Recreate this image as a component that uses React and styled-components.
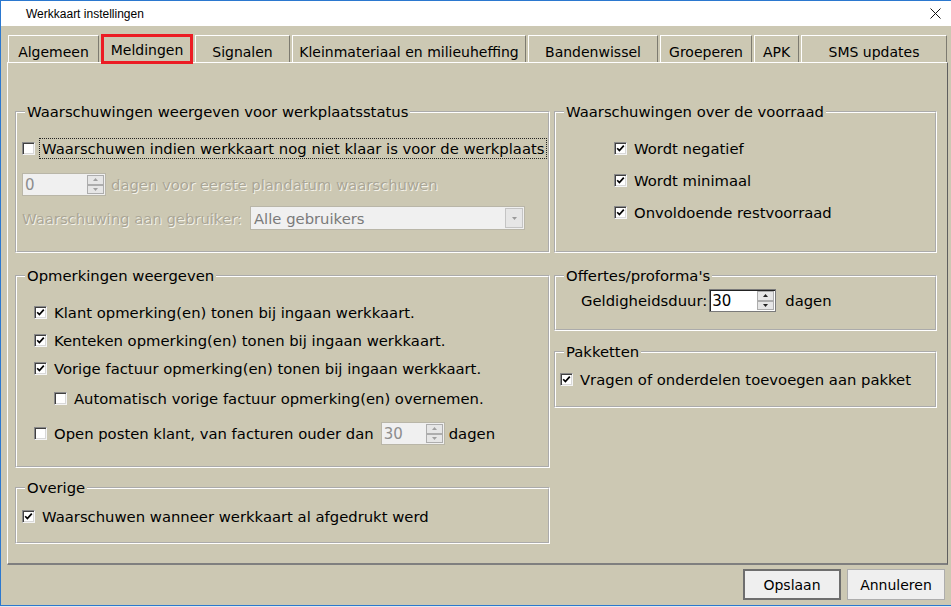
import styled, { createGlobalStyle } from "styled-components";

const GlobalStyle = createGlobalStyle`
  html, body {
    margin: 0;
    padding: 0;
    background: #e9e9e9;
  }
  body {
    font-family: "DejaVu Sans", Verdana, sans-serif;
    color: #000;
  }
`;

const Window = styled.div`
  width: 951px;
  height: 606px;
  box-sizing: border-box;
  background: #ccc8b3;
  border-left: 1px solid #2b78cf;
  border-bottom: 1px solid #2b78cf;
  display: flex;
  flex-direction: column;
`;

const TitleBar = styled.div`
  height: 26px;
  box-sizing: border-box;
  background: #fff;
  border-top: 1px solid #2b78cf;
  display: flex;
  align-items: center;
  justify-content: space-between;
  padding: 0 10px 0 25px;
  font-family: "Liberation Sans", Arial, sans-serif;
  font-size: 12px;
`;

const CloseIcon = () => (
  <svg width="11" height="11" viewBox="0 0 11 11">
    <path d="M0.5 0.5 L10.5 10.5 M10.5 0.5 L0.5 10.5" stroke="#111" strokeWidth="1" fill="none" />
  </svg>
);

const TabStrip = styled.div`
  height: 29px;
  margin-top: 7px;
  padding-left: 7px;
  display: flex;
  align-items: flex-end;
  gap: 2px;
`;

const Tab = styled.div`
  position: relative;
  z-index: 1;
  width: ${(p) => p.$w}px;
  box-sizing: border-box;
  height: ${(p) => (p.$active ? 30 : 27)}px;
  margin-bottom: ${(p) => (p.$active ? -2 : 0)}px;
  display: flex;
  align-items: center;
  justify-content: center;
  padding-top: ${(p) => (p.$active ? 1 : 5)}px;
  font-size: 14px;
  background: #ccc8b3;
  border-top: 1px solid #fff;
  border-left: 1px solid #fff;
  border-right: 1px solid #7d7b70;
  ${(p) =>
    p.$active &&
    `
    border: 3px solid #ec1c24;
  `}
`;

const Panel = styled.div`
  margin-left: 6px;
  width: 941px;
  height: 503px;
  box-sizing: border-box;
  border-top: 1px solid #fff;
  border-left: 1px solid #fff;
  border-right: 1px solid #5f5f5f;
  border-bottom: 2px solid #7f7f7f;
  padding: 40px 0 0 7px;
  display: grid;
  grid-template-columns: 535px 383px;
  column-gap: 4px;
  align-items: start;
`;

const Column = styled.div`
  display: flex;
  flex-direction: column;
`;

const Group = styled.fieldset`
  margin: ${(p) => p.$mt || 0}px 0 0;
  padding: 0;
  min-width: 0;
  height: ${(p) => p.$h}px;
  box-sizing: border-box;
  border: 2px groove #fff;
  font-size: 14.8px;
`;

const Legend = styled.legend`
  margin-left: 8px;
  padding: 0 2px;
  line-height: 17px;
  font-size: 14.8px;
`;

const Row = styled.div`
  display: flex;
  align-items: center;
  height: ${(p) => p.$h || 20}px;
  margin-top: ${(p) => p.$mt || 0}px;
  padding-left: ${(p) => p.$indent || 0}px;
  gap: ${(p) => p.$gap ?? 7}px;
  white-space: nowrap;
`;

const Label = styled.span`
  color: ${(p) => (p.$disabled ? "#aaa696" : "#000")};
  text-shadow: ${(p) => (p.$disabled ? "1px 1px 0 #f4f2ea" : "none")};
  width: ${(p) => (p.$w ? `${p.$w}px` : "auto")};
  margin-left: ${(p) => p.$ml || 0}px;
  flex: none;
`;

const Focus = styled.span`
  border: 1px dotted #222;
  padding: 1px 2px 1px 2px;
  margin-left: -3px;
  line-height: 17px;
`;

const Box = styled.span`
  width: 13px;
  height: 13px;
  box-sizing: border-box;
  flex: none;
  background: #fff;
  border: 1px solid;
  border-color: #8a8a8a #f4f4f4 #f4f4f4 #8a8a8a;
  box-shadow: inset 1px 1px #404040, inset -1px -1px #d8d8d8;
  display: flex;
  align-items: center;
  justify-content: center;
`;

const Check = ({ on }) => (
  <Box>
    {on && (
      <svg width="9" height="9" viewBox="0 0 9 9">
        <path d="M1.2 4.2 L3.4 6.6 L7.8 1.6" stroke="#000" strokeWidth="1.7" fill="none" />
      </svg>
    )}
  </Box>
);

const SpinBox = styled.div`
  width: ${(p) => p.$w}px;
  height: ${(p) => p.$h || 23}px;
  box-sizing: border-box;
  flex: none;
  display: flex;
  background: ${(p) => (p.$disabled ? "#f0f0f0" : "#fff")};
  border: 1px solid ${(p) => (p.$disabled ? "#b9b6a8" : "#7a7a7a")};
  ${(p) => !p.$disabled && "box-shadow: inset 1px 1px #222;"}
`;

const SpinValue = styled.span`
  flex: 1;
  padding-left: 2px;
  display: flex;
  align-items: center;
  font-size: 15px;
  color: ${(p) => (p.$disabled ? "#8d8d8d" : "#000")};
`;

const SpinButtons = styled.div`
  width: 17px;
  display: flex;
  flex-direction: column;
  padding: 1px;
`;

const SpinButton = styled.span`
  flex: 1;
  background: #e6e6e6;
  border: 1px solid #adadad;
  display: flex;
  align-items: center;
  justify-content: center;
`;

const Arrow = ({ up, color = "#222" }) => (
  <svg width="5" height="3" viewBox="0 0 5 3">
    <path d={up ? "M0 3 L2.5 0 L5 3 Z" : "M0 0 L5 0 L2.5 3 Z"} fill={color} />
  </svg>
);

const Spin = ({ value, w, h, disabled }) => (
  <SpinBox $w={w} $h={h} $disabled={disabled}>
    <SpinValue $disabled={disabled}>{value}</SpinValue>
    <SpinButtons>
      <SpinButton>
        <Arrow up color={disabled ? "#a0a0a0" : "#222"} />
      </SpinButton>
      <SpinButton>
        <Arrow color={disabled ? "#a0a0a0" : "#222"} />
      </SpinButton>
    </SpinButtons>
  </SpinBox>
);

const Combo = styled.div`
  width: 275px;
  height: 24px;
  box-sizing: border-box;
  flex: none;
  display: flex;
  align-items: stretch;
  background: #f0f0f0;
  border: 1px solid #b9b6a8;
`;

const ComboText = styled.span`
  flex: 1;
  padding-left: 3px;
  display: flex;
  align-items: center;
  color: #7a7a7a;
`;

const ComboButton = styled.span`
  width: 16px;
  margin: 1px;
  background: #e6e6e6;
  border: 1px solid #c4c4c4;
  display: flex;
  align-items: center;
  justify-content: center;
`;

const Footer = styled.div`
  flex: 1;
  display: flex;
  justify-content: flex-end;
  align-items: flex-start;
  gap: 6px;
  padding: 4px 6px 0 0;
`;

const Button = styled.button`
  width: 98px;
  height: 31px;
  font-family: "DejaVu Sans", Verdana, sans-serif;
  font-size: 14px;
  color: #000;
  background: #efefef;
  border: ${(p) => (p.$default ? "2px solid #6e6e6e" : "1px solid #adadad")};
  padding: 0;
`;

const tabs = [
  { label: "Algemeen", w: 91 },
  { label: "Meldingen", w: 92, active: true },
  { label: "Signalen", w: 95 },
  { label: "Kleinmateriaal en milieuheffing", w: 234 },
  { label: "Bandenwissel", w: 130 },
  { label: "Groeperen", w: 92 },
  { label: "APK", w: 45 },
  { label: "SMS updates", w: 146 },
];

export default function App() {
  return (
    <>
      <GlobalStyle />
      <Window>
        <TitleBar>
          <span>Werkkaart instellingen</span>
          <CloseIcon />
        </TitleBar>

        <TabStrip>
          {tabs.map((t) => (
            <Tab key={t.label} $w={t.w} $active={t.active}>
              {t.label}
            </Tab>
          ))}
        </TabStrip>

        <Panel>
          <Column>
            <Group $h={150}>
              <Legend>Waarschuwingen weergeven voor werkplaatsstatus</Legend>
              <Row $mt={18} $h={21} $indent={5}>
                <Check />
                <Focus>Waarschuwen indien werkkaart nog niet klaar is voor de werkplaats</Focus>
              </Row>
              <Row $mt={14} $h={23} $indent={5} $gap={5}>
                <Spin value="0" w={84} disabled />
                <Label $disabled>dagen voor eerste plandatum waarschuwen</Label>
              </Row>
              <Row $mt={10} $h={24} $indent={5} $gap={0}>
                <Label $disabled $w={228}>Waarschuwing aan gebruiker:</Label>
                <Combo>
                  <ComboText>Alle gebruikers</ComboText>
                  <ComboButton>
                    <Arrow color="#9a9a9a" />
                  </ComboButton>
                </Combo>
              </Row>
            </Group>

            <Group $h={201} $mt={14}>
              <Legend>Opmerkingen weergeven</Legend>
              <Row $mt={18} $indent={17}>
                <Check on />
                <Label>Klant opmerking(en) tonen bij ingaan werkkaart.</Label>
              </Row>
              <Row $mt={8} $indent={17}>
                <Check on />
                <Label>Kenteken opmerking(en) tonen bij ingaan werkkaart.</Label>
              </Row>
              <Row $mt={8} $indent={17}>
                <Check on />
                <Label>Vorige factuur opmerking(en) tonen bij ingaan werkkaart.</Label>
              </Row>
              <Row $mt={10} $indent={37}>
                <Check />
                <Label>Automatisch vorige factuur opmerking(en) overnemen.</Label>
              </Row>
              <Row $mt={14} $h={23} $indent={17}>
                <Check />
                <Label>Open posten klant, van facturen ouder dan</Label>
                <Row as="span" $gap={4}>
                  <Spin value="30" w={64} h={23} disabled />
                  <Label>dagen</Label>
                </Row>
              </Row>
            </Group>

            <Group $h={65} $mt={11}>
              <Legend>Overige</Legend>
              <Row $mt={10} $indent={5}>
                <Check on />
                <Label>Waarschuwen wanneer werkkaart al afgedrukt werd</Label>
              </Row>
            </Group>
          </Column>

          <Column>
            <Group $h={150}>
              <Legend>Waarschuwingen over de voorraad</Legend>
              <Row $mt={18} $indent={58}>
                <Check on />
                <Label>Wordt negatief</Label>
              </Row>
              <Row $mt={12} $indent={58}>
                <Check on />
                <Label>Wordt minimaal</Label>
              </Row>
              <Row $mt={12} $indent={58}>
                <Check on />
                <Label>Onvoldoende restvoorraad</Label>
              </Row>
            </Group>

            <Group $h={64} $mt={14}>
              <Legend>Offertes/proforma's</Legend>
              <Row $mt={5} $h={23} $indent={25} $gap={2}>
                <Label>Geldigheidsduur:</Label>
                <Spin value="30" w={67} />
                <Label $ml={7}>dagen</Label>
              </Row>
            </Group>

            <Group $h={65} $mt={12}>
              <Legend>Pakketten</Legend>
              <Row $mt={9} $indent={4}>
                <Check on />
                <Label>Vragen of onderdelen toevoegen aan pakket</Label>
              </Row>
            </Group>
          </Column>
        </Panel>

        <Footer>
          <Button $default>Opslaan</Button>
          <Button>Annuleren</Button>
        </Footer>
      </Window>
    </>
  );
}
